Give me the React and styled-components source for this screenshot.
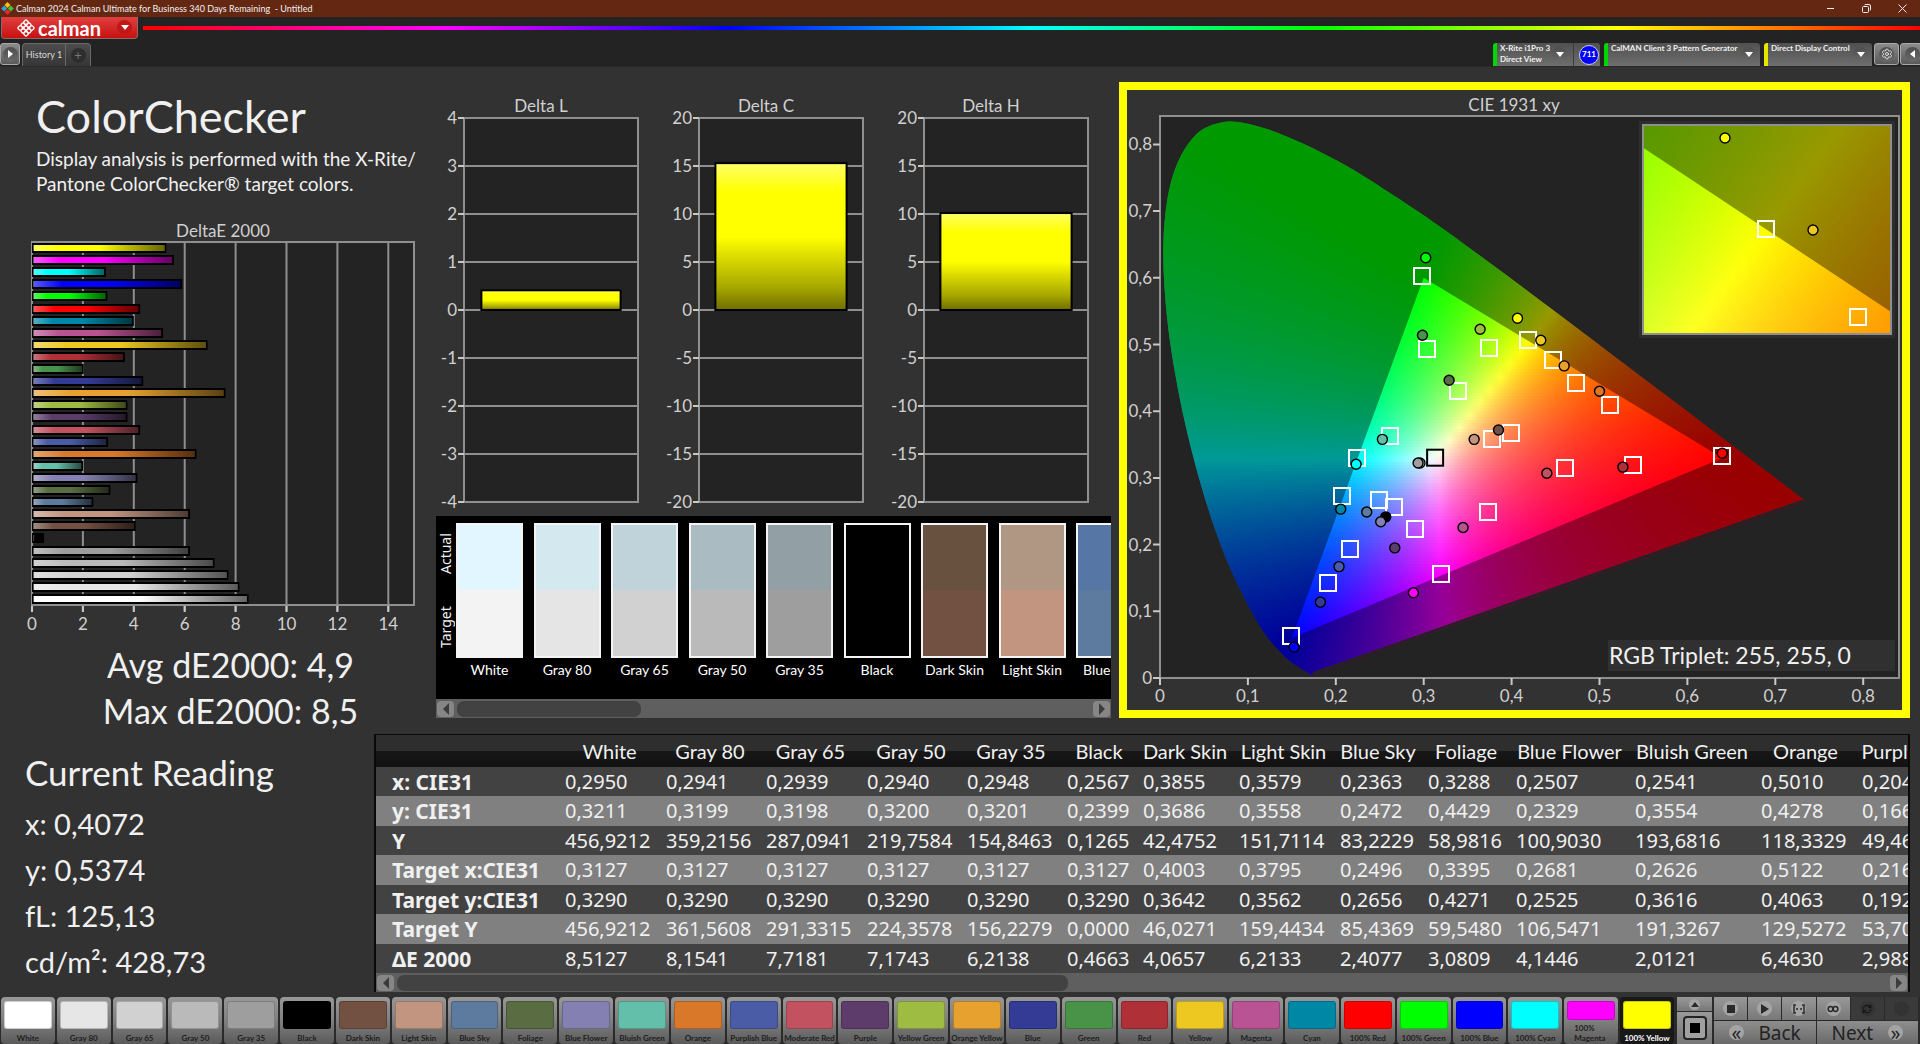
import React from "react";
import styled, {createGlobalStyle, css} from 'styled-components'
import {RefreshCw, Settings} from 'lucide-react'

const SANS = `Lato, "Noto Sans", sans-serif`
const UI = `"Noto Sans", "Open Sans", sans-serif`

const PATCHES = [
  {name: 'White', color: '#ffffff', actual: '#e2f6ff', target: '#f3f3f3', de: 8.51},
  {name: 'Gray 80', color: '#e6e6e6', actual: '#d4e8f0', target: '#e5e5e5', de: 8.15},
  {name: 'Gray 65', color: '#d1d1d1', actual: '#c0d3da', target: '#d1d1d1', de: 7.72},
  {name: 'Gray 50', color: '#bababa', actual: '#abbbc2', target: '#bababa', de: 7.17},
  {name: 'Gray 35', color: '#9e9e9e', actual: '#929fa5', target: '#9e9e9e', de: 6.21},
  {name: 'Black', color: '#000000', actual: '#000000', target: '#000000', de: 0.47},
  {name: 'Dark Skin', color: '#735142', actual: '#69513f', target: '#735142', de: 4.07},
  {name: 'Light Skin', color: '#c29581', actual: '#b09784', target: '#c29581', de: 6.21},
  {name: 'Blue Sky', color: '#5d7b9e', actual: '#5676a6', target: '#5d7b9e', de: 2.41},
  {name: 'Foliage', color: '#5a6c41', de: 3.08},
  {name: 'Blue Flower', color: '#8480b1', de: 4.14},
  {name: 'Bluish Green', color: '#64bfaa', de: 2.01},
  {name: 'Orange', color: '#d87828', de: 6.46},
  {name: 'Purplish Blue', color: '#4a5ca6', de: 2.99},
  {name: 'Moderate Red', color: '#c35261', de: 4.25},
  {name: 'Purple', color: '#5d3c6b', de: 3.75},
  {name: 'Yellow Green', color: '#9fbc42', de: 3.75},
  {name: 'Orange Yellow', color: '#e6a12f', de: 7.6},
  {name: 'Blue', color: '#333b94', de: 4.37},
  {name: 'Green', color: '#489348', de: 2.03},
  {name: 'Red', color: '#b03038', de: 3.65},
  {name: 'Yellow', color: '#edc820', de: 6.9},
  {name: 'Magenta', color: '#ba5393', de: 5.15},
  {name: 'Cyan', color: '#0087a5', de: 4},
  {name: '100% Red', color: '#ff0000', de: 4.25},
  {name: '100% Green', color: '#00ff00', de: 2.96},
  {name: '100% Blue', color: '#0000ff', de: 5.9},
  {name: '100% Cyan', color: '#00ffff', de: 2.9},
  {name: '100% Magenta', color: '#ff00ff', de: 5.58},
  {name: '100% Yellow', color: '#ffff00', de: 5.28},
]

const TABLE_WIDTHS = [183, 101, 100, 101, 100, 100, 76, 96, 101, 88, 88, 119, 126, 101, 126]
const TABLE_ROWS = [
  ['x: CIE31', '0,2950', '0,2941', '0,2939', '0,2940', '0,2948', '0,2567', '0,3855', '0,3579', '0,2363', '0,3288', '0,2507', '0,2541', '0,5010', '0,2041'],
  ['y: CIE31', '0,3211', '0,3199', '0,3198', '0,3200', '0,3201', '0,2399', '0,3686', '0,3558', '0,2472', '0,4429', '0,2329', '0,3554', '0,4278', '0,1667'],
  ['Y', '456,9212', '359,2156', '287,0941', '219,7584', '154,8463', '0,1265', '42,4752', '151,7114', '83,2229', '58,9816', '100,9030', '193,6816', '118,3329', '49,4611'],
  ['Target x:CIE31', '0,3127', '0,3127', '0,3127', '0,3127', '0,3127', '0,3127', '0,4003', '0,3795', '0,2496', '0,3395', '0,2681', '0,2626', '0,5122', '0,2164'],
  ['Target y:CIE31', '0,3290', '0,3290', '0,3290', '0,3290', '0,3290', '0,3290', '0,3642', '0,3562', '0,2656', '0,4271', '0,2525', '0,3616', '0,4063', '0,1921'],
  ['Target Y', '456,9212', '361,5608', '291,3315', '224,3578', '156,2279', '0,0000', '46,0271', '159,4434', '85,4369', '59,5480', '106,5471', '191,3267', '129,5272', '53,7012'],
  ['ΔE 2000', '8,5127', '8,1541', '7,7181', '7,1743', '6,2138', '0,4663', '4,0657', '6,2133', '2,4077', '3,0809', '4,1446', '2,0121', '6,4630', '2,9881'],
]

const TARGETS = [
  [0.2986, 0.6024], [0.3042, 0.493], [0.3748, 0.4954], [0.3395, 0.43], [0.2621, 0.3627],
  [0.2246, 0.3303], [0.2067, 0.2722], [0.2667, 0.2557], [0.2489, 0.2673], [0.2902, 0.2232],
  [0.3733, 0.2489], [0.2162, 0.1927], [0.1908, 0.1419], [0.3198, 0.156], [0.1487, 0.063],
  [0.3782, 0.3578], [0.3995, 0.367], [0.4188, 0.5064], [0.4473, 0.4765], [0.4738, 0.4422],
  [0.5125, 0.4092], [0.4613, 0.3144], [0.5376, 0.3187], [0.6396, 0.3333],
]

const READINGS = [
  [0.3023, 0.63, '#00ff00'], [0.2986, 0.5138, '#489348'], [0.3642, 0.5229, '#9fbc42'],
  [0.3289, 0.4465, '#5a6c41'], [0.253, 0.3578, '#64bfaa'], [0.3851, 0.3719, '#735142'],
  [0.3574, 0.3578, '#c29581'], [0.2958, 0.3223, '#d1d1d1'], [0.2936, 0.3223, '#9e9e9e'],
  [0.2231, 0.3205, '#00ffff'], [0.2056, 0.2532, '#0087a5'], [0.2352, 0.2489, '#5d7b9e'],
  [0.2568, 0.2416, '#000000'], [0.2511, 0.2343, '#8480b1'], [0.3448, 0.2257, '#ba5393'],
  [0.2671, 0.1951, '#5d3c6b'], [0.2037, 0.167, '#4a5ca6'], [0.1825, 0.1138, '#333b94'],
  [0.2883, 0.1278, '#ff00ff'], [0.1525, 0.0465, '#0000ff'], [0.4067, 0.5393, '#ffff00'],
  [0.4332, 0.5064, '#edc820'], [0.4598, 0.4679, '#e6a12f'], [0.5, 0.43, '#d87828'],
  [0.4401, 0.307, '#c35261'], [0.5266, 0.3162, '#b03038'], [0.6396, 0.337, '#ff0000'],
]

const LOCUS = [
  [0.1741, 0.005], [0.1714, 0.0051], [0.1644, 0.0109], [0.1566, 0.0177], [0.144, 0.0297],
  [0.1241, 0.0578], [0.1096, 0.0868], [0.0913, 0.1327], [0.0687, 0.2007], [0.0454, 0.295],
  [0.0235, 0.4127], [0.0082, 0.5384], [0.0039, 0.6548], [0.0139, 0.7502], [0.0389, 0.812],
  [0.0743, 0.8338], [0.1142, 0.8262], [0.1547, 0.8059], [0.1929, 0.7816], [0.2296, 0.7543],
  [0.3016, 0.6923], [0.3731, 0.6245], [0.4441, 0.5547], [0.5125, 0.4866], [0.5752, 0.4242],
  [0.627, 0.3725], [0.6658, 0.334], [0.6915, 0.3083], [0.719, 0.2809], [0.7347, 0.2653],
]

const GAMUT = [[0.3, 0.6], [0.64, 0.33], [0.15, 0.06]]

// brightest linear sRGB colour that has this chromaticity
function chroma(x, y){
  let z = 1 - x - y
  let rgb = [
    3.2406 * x - 1.5372 * y - 0.4986 * z,
    -0.9689 * x + 1.8758 * y + 0.0415 * z,
    0.0557 * x - 0.204 * y + 1.057 * z,
  ].map(v => Math.max(0, v))
  let max = Math.max(...rgb)
  return `rgb(${rgb.map(v => Math.round(255 * v / max)).join(',')})`
}

// closed Catmull-Rom curve through the locus, the purple line stays straight
function locusPath(px, py){
  let p = LOCUS.map(([x, y]) => [px(x), py(y)])
  let d = `M${p[0]}`
  for (let i = 0; i < p.length - 1; i++){
    let a = p[i - 1] || p[i], b = p[i], c = p[i + 1], e = p[i + 2] || c
    d += `C${b[0] + (c[0] - a[0]) / 6},${b[1] + (c[1] - a[1]) / 6} ${c[0] - (e[0] - b[0]) / 6},${c[1] - (e[1] - b[1]) / 6} ${c}`
  }
  return d + 'Z'
}

function ChromaField({id, left, top, right, bottom, toX, toY, step}){
  let rows = []
  for (let y = top; y < bottom; y += 3) rows.push(y)
  let stops = []
  for (let x = left; x <= right; x += step) stops.push(x)
  return(
    <g shapeRendering='crispEdges'>
      {rows.map(y =>
        <React.Fragment key={y}>
          <linearGradient id={`${id}${y}`}>
            {stops.map(x =>
              <stop key={x} offset={(x - left) / (right - left)} stopColor={chroma(toX(x), toY(y + 1))}/>
            )}
          </linearGradient>
          <rect x={left} y={y} width={right - left} height={Math.min(3, bottom - y)} fill={`url(#${id}${y})`}/>
        </React.Fragment>
      )}
    </g>
  )
}

function Gamut(){
  const px = x => 33 + x * 879
  const py = y => 588 - y * 667
  const zx = x => 639 + (x - 0.4193) * 3330
  const zy = y => 139 - (y - 0.5053) * 2780
  let locus = locusPath(px, py)
  let tri = 'M' + GAMUT.map(([x, y]) => `${px(x)},${py(y)}`).join('L') + 'Z'
  let zoomTri = 'M' + GAMUT.map(([x, y]) => `${zx(x)},${zy(y)}`).join('L') + 'Z'
  let ticks = [0, 0.1, 0.2, 0.3, 0.4, 0.5, 0.6, 0.7, 0.8]
  const label = t => String(t).replace('.', ',')
  return(
    <Chart viewBox='0 0 775 620'>
      <defs>
        <clipPath id='locus'><path d={locus}/></clipPath>
        <clipPath id='inset'><rect x='517' y='36' width='246' height='207'/></clipPath>
      </defs>
      <AxisText x='387' y='21' textAnchor='middle'>CIE 1931 xy</AxisText>
      <rect x='33' y='26' width='739' height='562' fill='#232323' stroke='#8f8f8f' strokeWidth='2'/>
      <g clipPath='url(#locus)'>
        <ChromaField id='c' left={33} right={683} top={30} bottom={585} step={10}
          toX={x => (x - 33) / 879} toY={y => (588 - y) / 667}/>
        <path d={`M0,0H775V620H0Z${tri}`} fillRule='evenodd' fill='#000' fillOpacity='0.4'/>
        <path d={`M${px(0.1741)},${py(0.005)}L${px(0.7347)},${py(0.2653)}`} stroke='#232323' strokeWidth='5'/>
        <path d={`M${px(0.1741)},${py(0.005)}L${px(0.7347)},${py(0.2653)}`} stroke='#4a1030' strokeWidth='1'/>
      </g>
      {ticks.map(t =>
        <g key={t}>
          <path d={`M26,${py(t)}H33M${px(t)},588V595`} stroke='#c8c8c8' strokeWidth='2'/>
          <AxisText x='25' y={py(t) + 6} textAnchor='end'>{label(t)}</AxisText>
          <AxisText x={px(t)} y='612' textAnchor='middle'>{label(t)}</AxisText>
        </g>
      )}
      {TARGETS.map(([x, y], i) =>
        <rect key={i} x={Math.round(px(x)) - 8} y={Math.round(py(y)) - 8} width='16' height='16' fill='none' stroke='#fff' strokeWidth='2'/>
      )}
      <rect x={px(0.313) - 8} y={py(0.3303) - 8} width='16' height='16' fill='none' stroke='#000' strokeWidth='2'/>
      {READINGS.map(([x, y, color], i) =>
        <circle key={i} cx={px(x)} cy={py(y)} r='5' fill={color} stroke='#000' strokeWidth='1.4'/>
      )}

      <rect x='512' y='31' width='256' height='217' fill='#2e2e2e'/>
      <g clipPath='url(#inset)'>
        <ChromaField id='z' left={516} right={766} top={35} bottom={244} step={10}
          toX={x => 0.4193 + (x - 639) / 3330} toY={y => 0.5053 - (y - 139) / 2780}/>
        <path d={`M0,0H775V620H0Z${zoomTri}`} fillRule='evenodd' fill='#000' fillOpacity='0.4'/>
      </g>
      <rect x='516' y='35' width='248' height='209' fill='none' stroke='#8f8f8f' strokeWidth='2'/>
      <rect x='631' y='131' width='16' height='16' fill='none' stroke='#fff' strokeWidth='2'/>
      <rect x='723' y='219' width='16' height='16' fill='none' stroke='#fff' strokeWidth='2'/>
      <circle cx='598' cy='48' r='5' fill='#ffff00' stroke='#000' strokeWidth='1.4'/>
      <circle cx='686' cy='140' r='5' fill='#edc820' stroke='#000' strokeWidth='1.4'/>

      <rect x='481' y='550' width='287' height='31' fill='#303030'/>
      <TripletText x='482' y='574'>RGB Triplet: 255, 255, 0</TripletText>
    </Chart>
  )
}

function DeltaE(){
  const px = v => 32 + v * 25.45
  let bars = [...PATCHES].reverse()
  return(
    <Chart viewBox='0 0 436 420'>
      <defs>
        <linearGradient id='shade'>
          <stop offset='0' stopColor='#fff' stopOpacity='0.35'/>
          <stop offset='0.2' stopColor='#fff' stopOpacity='0'/>
          <stop offset='0.5' stopColor='#000' stopOpacity='0'/>
          <stop offset='1' stopColor='#000' stopOpacity='0.6'/>
        </linearGradient>
      </defs>
      <AxisText x='223' y='24' textAnchor='middle'>DeltaE 2000</AxisText>
      <rect x='32' y='29' width='382' height='363' fill='#232323'/>
      {[0, 2, 4, 6, 8, 10, 12, 14].map(v =>
        <g key={v}>
          <path d={`M${px(v)},29V398`} stroke='#8f8f8f' strokeWidth='2'/>
          <path d={`M${px(v)},393V399`} stroke='#c8c8c8' strokeWidth='2'/>
          <AxisText x={px(v)} y='417' textAnchor='middle'>{v}</AxisText>
        </g>
      )}
      <rect x='32' y='29' width='382' height='363' fill='none' stroke='#8f8f8f' strokeWidth='2'/>
      {bars.map((p, i) => {
        let y = Math.round(34 + i * 12.1) - 3
        return(
          <g key={p.name}>
            <rect x='33' y={y} width={px(p.de) - 34} height='8' fill={p.color} stroke='#000' strokeWidth='2'/>
            <rect x='33' y={y + 1} width={px(p.de) - 35} height='6' fill='url(#shade)'/>
          </g>
        )
      })}
    </Chart>
  )
}

function DeltaBar({title, max, value, frameX}){
  let unit = 192 / max
  let ticks = [4, 3, 2, 1, 0, -1, -2, -3, -4].map(n => n * max / 4)
  let w = 202 - frameX
  return(
    <Chart viewBox='0 0 225 434'>
      <defs>
        <linearGradient id='fall' x2='0' y2='1'>
          <stop offset='0' stopColor='#ffff66'/>
          <stop offset='0.2' stopColor='#ffff00'/>
          <stop offset='0.5' stopColor='#ffff00'/>
          <stop offset='0.85' stopColor='#a6a600'/>
          <stop offset='1' stopColor='#6e6e00'/>
        </linearGradient>
      </defs>
      <AxisText x='105' y='30' textAnchor='middle'>{title}</AxisText>
      <rect x={frameX} y='36' width={w} height='384' fill='#232323' stroke='#8f8f8f' strokeWidth='2'/>
      {ticks.map(t =>
        <g key={t}>
          <path d={`M${frameX},${228 - t * unit}H202`} stroke='#8f8f8f' strokeWidth='2'/>
          <path d={`M${frameX - 6},${228 - t * unit}H${frameX}`} stroke='#c8c8c8' strokeWidth='2'/>
          <AxisText x={frameX - 7} y={234 - t * unit} textAnchor='end'>{t}</AxisText>
        </g>
      )}
      <rect x={frameX + w * 0.1} y={228 - value * unit} width={w * 0.8} height={value * unit} fill='url(#fall)' stroke='#000' strokeWidth='2'/>
    </Chart>
  )
}

function ScrollBar({thumb}){
  return(
    <Bar>
      <BarButton aria-label='Scroll left'><svg width='6' height='12'><path d='M6 0V12L0 6Z' fill='#3c3c3c'/></svg></BarButton>
      <Track><Thumb style={{width: `${thumb}%`}}/></Track>
      <BarButton aria-label='Scroll right'><svg width='6' height='12'><path d='M0 0V12L6 6Z' fill='#3c3c3c'/></svg></BarButton>
    </Bar>
  )
}

function Chevron(){
  return <Knob><svg width='8' height='5'><path d='M0 0H8L4 5Z' fill='#fff'/></svg></Knob>
}

function Header(){
  return(
    <header>
      <TitleBar>
        <svg width='13' height='13' viewBox='0 0 13 13'>
          <path d='M6.5 0L9.5 3L6.5 6L3.5 3Z' fill='#f5c211'/>
          <path d='M3.2 3.5L6.2 6.5L3.2 9.5L.2 6.5Z' fill='#2aa8e0'/>
          <path d='M9.8 3.5L12.8 6.5L9.8 9.5L6.8 6.5Z' fill='#37c837'/>
          <path d='M6.5 7L9.5 10L6.5 13L3.5 10Z' fill='#e8272c'/>
        </svg>
        <span>Calman 2024 Calman Ultimate for Business 340 Days Remaining&nbsp; - Untitled</span>
        <WindowButtons>
          <WindowButton aria-label='Minimize'><svg width='9' height='9'><path d='M1 4.5H8' stroke='#eee'/></svg></WindowButton>
          <WindowButton aria-label='Restore'>
            <svg width='9' height='9' fill='none' stroke='#eee'><rect x='.5' y='2.5' width='6' height='6' rx='1'/><path d='M2.5 1Q3 .5 4 .5H7Q8.5 .5 8.5 2V5Q8.5 6 8 6.5'/></svg>
          </WindowButton>
          <WindowButton aria-label='Close'><svg width='9' height='9'><path d='M.5 .5L8.5 8.5M8.5 .5L.5 8.5' stroke='#eee'/></svg></WindowButton>
        </WindowButtons>
      </TitleBar>
      <Brand>
        <LogoButton>
          <svg width='18' height='18' viewBox='-9 -9 18 18'>
            <g transform='rotate(45)' fill='none' stroke='#fff' strokeWidth='1.3'>
              {[-4, 0, 4].map(x => [-4, 0, 4].map(y => <rect key={`${x}${y}`} x={x - 2} y={y - 2} width='4' height='4' rx='1.3'/>))}
            </g>
          </svg>
          <span>calman</span>
          <LogoKnob><svg width='8' height='5'><path d='M0 0H8L4 5Z' fill='#fff'/></svg></LogoKnob>
        </LogoButton>
        <Rainbow/>
      </Brand>
      <Tabs>
        <EdgeButton aria-label='Open panel'><Knob><svg width='5' height='8'><path d='M0 0V8L5 4Z' fill='#fff'/></svg></Knob></EdgeButton>
        <Tab>History 1</Tab>
        <AddTab aria-label='Add tab'><Knob $dim>+</Knob></AddTab>
        <Spacer/>
        <Device $tone='#00d800' $width={107}>
          <span>X-Rite i1Pro 3<br/>Direct View</span>
          <Chevron/>
          <Divider/>
          <Count>711</Count>
        </Device>
        <Device $tone='#00d800' $width={156}><span>CalMAN Client 3 Pattern Generator</span><Chevron/></Device>
        <Device $tone='#e6e600' $width={108}><span>Direct Display Control</span><Chevron/></Device>
        <EdgeButton aria-label='Settings'><Knob><Settings size={12} color='#ddd'/></Knob></EdgeButton>
        <EdgeButton aria-label='Close panel'><Knob><svg width='5' height='8'><path d='M5 0V8L0 4Z' fill='#fff'/></svg></Knob></EdgeButton>
      </Tabs>
    </header>
  )
}

function Swatches(){
  return(
    <SwatchPanel>
      <SwatchArea>
        <Side><span>Target</span><span>Actual</span></Side>
        <SwatchGrid>
          {PATCHES.slice(0, 9).map(p =>
            <Swatch key={p.name}>
              <SwatchBox $actual={p.actual} $target={p.target}/>
              {p.name}
            </Swatch>
          )}
        </SwatchGrid>
      </SwatchArea>
      <ScrollBar thumb={29}/>
    </SwatchPanel>
  )
}

function Readings(){
  return(
    <TablePanel>
      <TableClip>
        <Table>
          <colgroup>{TABLE_WIDTHS.map((w, i) => <col key={i} width={w}/>)}</colgroup>
          <thead>
            <tr>
              <td/>
              {PATCHES.slice(0, 14).map(p => <th key={p.name} scope='col'>{p.name}</th>)}
            </tr>
          </thead>
          <tbody>
            {TABLE_ROWS.map(([head, ...cells]) =>
              <tr key={head}>
                <th scope='row'>{head}</th>
                {cells.map((c, i) => <td key={i}>{c}</td>)}
              </tr>
            )}
          </tbody>
        </Table>
      </TableClip>
      <ScrollBar thumb={45}/>
    </TablePanel>
  )
}

function Footer(){
  return(
    <Dock>
      <Palette>
        {PATCHES.map(p =>
          <Patch key={p.name} $active={p.name == '100% Yellow'}>
            <PatchColor $color={p.color}/>
            {p.name == '100% Magenta' ? <PatchName $wrap>100%<br/>Magenta</PatchName> : <PatchName>{p.name}</PatchName>}
          </Patch>
        )}
      </Palette>
      <StopColumn>
        <Control aria-label='Expand'><Dot><svg width='8' height='5'><path d='M0 5H8L4 0Z' fill='#2a2a2a'/></svg></Dot></Control>
        <Control aria-label='Stop'>
          <svg width='24' height='24'>
            <rect x='1' y='1' width='22' height='22' rx='3' fill='#a0a0a0' stroke='#222' strokeWidth='2'/>
            <rect x='7' y='7' width='10' height='10' fill='#000'/>
          </svg>
        </Control>
      </StopColumn>
      <Transport>
        <Control aria-label='Stop reading'><Dot><svg width='8' height='8'><rect width='8' height='8' fill='#2a2a2a'/></svg></Dot></Control>
        <Control aria-label='Read'><Dot><svg width='8' height='10'><path d='M0 0L8 5L0 10Z' fill='#2a2a2a'/></svg></Dot></Control>
        <Control aria-label='Read series'>
          <Dot><svg width='12' height='10' fill='none' stroke='#2a2a2a' strokeWidth='1.5'><path d='M3 1H1V9H3M9 1H11V9H9M3 5H5M7 5H9'/></svg></Dot>
        </Control>
        <Control aria-label='Read continuously'>
          <Dot><svg width='12' height='8' fill='none' stroke='#2a2a2a' strokeWidth='1.5'><circle cx='3.5' cy='4' r='2.4'/><circle cx='8.5' cy='4' r='2.4'/></svg></Dot>
        </Control>
        <Control $off aria-label='Refresh'><Dot $off><RefreshCw size={10} strokeWidth={3} color='#161616'/></Dot></Control>
        <Control $off aria-label='Record'><Dot $off/></Control>
        <Nav><Dot>«</Dot>Back</Nav>
        <Nav>Next<Dot>»</Dot></Nav>
      </Transport>
    </Dock>
  )
}

export default function App(){
  return(
    <Page>
      <Global/>
      <Header/>
      <Workspace>
        <Upper>
          <Summary>
            <Title>ColorChecker</Title>
            <Intro>Display analysis is performed with the X-Rite/<br/>Pantone ColorChecker® target colors.</Intro>
            <DeltaE/>
            <Totals>
              <div>Avg dE2000: 4,9</div>
              <div>Max dE2000: 8,5</div>
            </Totals>
          </Summary>
          <Middle>
            <Deltas>
              <DeltaBar title='Delta L' max={4} value={0.41} frameX={28}/>
              <DeltaBar title='Delta C' max={20} value={15.3} frameX={38}/>
              <DeltaBar title='Delta H' max={20} value={10.1} frameX={38}/>
            </Deltas>
            <Swatches/>
          </Middle>
          <GamutPanel><Gamut/></GamutPanel>
        </Upper>
        <Lower>
          <Current>
            <h2>Current Reading</h2>
            <p>x: 0,4072</p>
            <p>y: 0,5374</p>
            <p>fL: 125,13</p>
            <p>cd/m²: 428,73</p>
          </Current>
          <Readings/>
        </Lower>
      </Workspace>
      <Footer/>
    </Page>
  )
}

const Global = createGlobalStyle`
  *{ box-sizing: border-box; }
  body{ margin: 0; background: #232323; }
  button{ font: inherit; color: inherit; border: 0; padding: 0; background: none; cursor: pointer; }
  h1, h2, p{ margin: 0; font-weight: 400; }
  svg{ display: block; flex: none; }
`

const center = css`
  display: flex;
  align-items: center;
  justify-content: center;
`

const Page = styled.div`
  display: flex;
  flex-direction: column;
  min-height: 100vh;
  overflow: hidden;
  font-family: ${SANS};
  color: #f0f0f0;
`

const TitleBar = styled.div`
  display: flex;
  align-items: center;
  gap: 2px;
  height: 17px;
  padding-left: 1px;
  background: #642711;
  font: 9px/16px ${SANS};
`

const WindowButtons = styled.div`
  display: flex;
  margin-left: auto;
`

const WindowButton = styled.button`
  ${center}
  width: 36px;
  height: 17px;
`

const Brand = styled.div`
  display: flex;
  gap: 5px;
  height: 22px;
  padding-left: 1px;
`

const LogoButton = styled.button`
  display: flex;
  align-items: center;
  gap: 3px;
  width: 137px;
  padding: 0 5px 0 15px;
  background: linear-gradient(#e04040, #c81010);
  border: 1px solid #8a6a6a;
  border-top: 0;
  border-radius: 0 0 4px 4px;
  color: #fff;
  font: 700 20px/18px ${SANS};
`

const LogoKnob = styled.span`
  ${center}
  width: 15px;
  height: 15px;
  margin-left: auto;
  border-radius: 50%;
  background: #c01818;
`

const Rainbow = styled.div`
  flex: 1;
  height: 4px;
  margin-top: 9px;
  background: linear-gradient(90deg, #f00, #f0f 17%, #00f 33%, #0ff 50%, #0f0 66%, #ff0 83%, #f00);
`

const Tabs = styled.div`
  display: flex;
  align-items: flex-end;
  height: 27px;
`

const Spacer = styled.div`
  flex: 1;
`

const Knob = styled.span`
  ${center}
  width: 15px;
  height: 15px;
  border-radius: 50%;
  flex: none;
  background: ${p=>p.$dim ? '#2e2e2e' : 'linear-gradient(#4e4e4e, #6a6a6a)'};
  color: ${p=>p.$dim ? '#777' : '#fff'};
  font-size: 13px;
  line-height: 15px;
`

const EdgeButton = styled.button`
  ${center}
  width: 24px;
  height: 22px;
  align-self: flex-start;
  margin: 4px -4px 0 0;
  background: linear-gradient(#8c8c8c, #5a5a5a);
  border: 1px solid #a8a8a8;
  border-radius: 3px;
  &:first-child{ width: 20px; margin-right: 2px; }
  &:nth-last-child(2){ width: 25px; margin-right: 1px; }
`

const Tab = styled.button`
  flex: none;
  width: 44px;
  height: 23px;
  background: linear-gradient(#4c4c4c, #363636);
  border: 1px solid #6a6a6a;
  border-bottom: 0;
  border-radius: 4px 0 0 0;
  color: #d8d8d8;
  white-space: nowrap;
  font: 9px/22px ${SANS};
`

const AddTab = styled(Tab)`
  ${center}
  width: 25px;
  border-left: 0;
  border-radius: 0 4px 0 0;
`

const Device = styled.button`
  display: flex;
  align-items: center;
  width: ${p=>p.$width}px;
  height: 23px;
  margin-right: ${p=>p.$width == 108 ? 2 : 4}px;
  padding: 0 4px 0 3px;
  background: linear-gradient(#505050, #6e6e6e);
  border-left: 4px solid ${p=>p.$tone};
  border-radius: 3px 3px 0 0;
  color: #f0f0f0;
  text-align: left;
  white-space: nowrap;
  font: 700 8px/11px ${SANS};
  > span:first-child{ align-self: flex-start; flex: 1; }
`

const Divider = styled.span`
  width: 1px;
  height: 23px;
  margin: 0 5px 0 6px;
  background: #3c3c3c;
`

const Count = styled.span`
  ${center}
  width: 20px;
  height: 20px;
  margin-right: -3px;
  border: 1px solid #ccd;
  border-radius: 50%;
  background: #00f;
  color: #fff;
`

const Workspace = styled.main`
  flex: 1;
  background: #323232;
  border-top: 1px solid #2a2a2a;
`

const Upper = styled.section`
  display: grid;
  grid-template-columns: 436px minmax(0, 675fr) minmax(0, 799fr);
  align-items: start;
  padding: 15px 10px 0 0;
`

const Summary = styled.div`
  min-width: 0;
`

const Title = styled.h1`
  margin-top: 4px;
  padding-left: 36px;
  font-size: 45px;
  line-height: 60px;
`

const Intro = styled.p`
  margin-bottom: 17px;
  padding-left: 36px;
  font-size: 19px;
  line-height: 25px;
  white-space: nowrap;
`

const Totals = styled.div`
  margin-top: 9px;
  padding-left: 25px;
  text-align: center;
  font-size: 34px;
  line-height: 46px;
`

const Middle = styled.div`
  min-width: 0;
`

const Deltas = styled.div`
  display: grid;
  grid-template-columns: repeat(3, 1fr);
`

const Chart = styled.svg`
  width: 100%;
  height: auto;
`

const AxisText = styled.text`
  font: 17px ${SANS};
  fill: #d0d0d0;
`

const TripletText = styled.text`
  font: 23px ${SANS};
  fill: #f0f0f0;
`

const GamutPanel = styled.div`
  margin-left: 8px;
  border: 8px solid #ffff00;
`

const SwatchPanel = styled.div`
  background: #000;
`

const SwatchArea = styled.div`
  display: flex;
  height: 183px;
  padding-top: 7px;
  overflow: hidden;
`

const Side = styled.div`
  display: flex;
  justify-content: space-between;
  width: 20px;
  height: 135px;
  padding: 10px 0;
  writing-mode: vertical-rl;
  transform: rotate(180deg);
  font: 14px/20px ${UI};
`

const SwatchGrid = styled.div`
  flex: 1;
  display: grid;
  grid-template-columns: repeat(8, minmax(0, 1fr)) 35px;
`

const Swatch = styled.div`
  width: 67px;
  color: #fff;
  font-size: 14px;
  line-height: 24px;
  text-align: center;
  white-space: nowrap;
`

const SwatchBox = styled.div`
  height: 135px;
  border: 2px solid #f4f4f4;
  background: linear-gradient(${p=>p.$actual} 50%, ${p=>p.$target} 50%);
`

const Bar = styled.div`
  display: flex;
  align-items: center;
  gap: 3px;
  height: 19px;
  padding: 0 1px;
  background: #5f5f5f;
`

const BarButton = styled.button`
  ${center}
  width: 17px;
  height: 16px;
  border-radius: 4px;
  background: #868686;
`

const Track = styled.div`
  flex: 1;
`

const Thumb = styled.div`
  height: 16px;
  border-radius: 7px;
  background: #424242;
`

const Lower = styled.section`
  display: flex;
  padding: 0 10px 5px 0;
`

const Current = styled.div`
  flex: 0 0 374px;
  padding: 14px 0 0 25px;
  font-size: 29px;
  line-height: 46px;
  h2{ padding-bottom: 4px; font-size: 35px; line-height: 49px; }
`

const TablePanel = styled.div`
  flex: 1;
  min-width: 0;
  border: 2px solid #0a0a0a;
  border-top-width: 1px;
  border-bottom: 0;
`

const TableClip = styled.div`
  overflow: hidden;
`

const Table = styled.table`
  width: 1605px;
  table-layout: fixed;
  border-collapse: collapse;
  font: 20px/28px ${UI};
  td, th{ padding: 0 0 0 6px; white-space: nowrap; text-align: left; }
  thead tr{ height: 32px; background: linear-gradient(#2e2e2e 50%, #171717 50%, #121212); }
  thead th{ padding: 0; font: 20px/32px ${SANS}; text-align: center; }
  tbody tr{ height: 29px; background: #424242; }
  tbody tr:nth-child(even){ height: 30px; background: #808080; }
  tbody th{ padding-left: 16px; font-size: 21px; }
`

const Dock = styled.footer`
  display: flex;
  gap: 2px;
  height: 47px;
  padding-right: 2px;
  background: #2a2a2a;
`

const Palette = styled.div`
  display: flex;
  flex: 1;
  min-width: 0;
`

const Patch = styled.button`
  flex: 1 1 0;
  min-width: 0;
  display: flex;
  flex-direction: column;
  margin: 0 1px;
  padding: 4px 3px 0;
  border-radius: 4px;
  background: ${p=>p.$active ? '#181818' : 'linear-gradient(#989898, #808080 50%, #5a5a5a)'};
  color: ${p=>p.$active ? '#fff' : '#1e1e1e'};
`

const PatchColor = styled.span`
  flex: 1;
  align-self: stretch;
  border: 1px solid rgba(0, 0, 0, 0.2);
  border-radius: 3px;
  background: ${p=>p.$color};
`

const PatchName = styled.span`
  align-self: ${p=>p.$wrap ? 'flex-start' : 'center'};
  margin: 0 -4px;
  padding: ${p=>p.$wrap ? '3px 0 1px 11px' : '4px 0 1px'};
  text-align: left;
  white-space: nowrap;
  font: 700 8px/10px ${SANS};
`

const StopColumn = styled.div`
  display: grid;
  grid-template-rows: 14px 32px;
  gap: 1px;
  width: 35px;
`

const Transport = styled.div`
  display: grid;
  grid-template-columns: repeat(6, 1fr);
  grid-template-rows: 23px 23px;
  gap: 1px;
  width: 204px;
`

const Control = styled.button`
  ${center}
  background: ${p=>p.$off ? '#3a3a3a' : 'linear-gradient(#999, #777)'};
`

const Dot = styled.span`
  ${center}
  width: 15px;
  height: 15px;
  border-radius: 50%;
  background: ${p=>p.$off ? '#333' : '#a4a4a4'};
  ${StopColumn} &{ width: 11px; height: 11px; }
`

const Nav = styled(Control)`
  grid-column: span 3;
  justify-content: space-evenly;
  background: linear-gradient(#8e8e8e, #6a6a6a);
  color: #222;
  font: 19px/22px ${UI};
`
